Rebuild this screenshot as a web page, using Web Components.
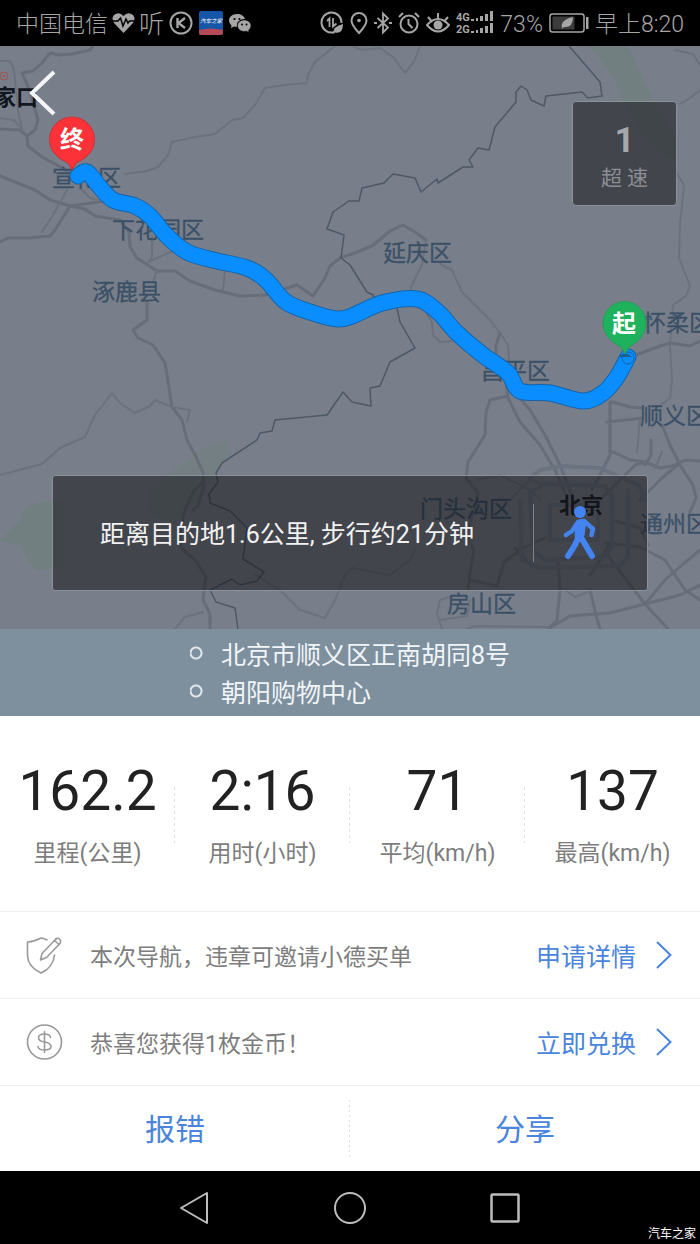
<!DOCTYPE html>
<html lang="zh-CN">
<head>
    <meta charset="UTF-8">
    <meta name="viewport" content="width=device-width, initial-scale=1.0">
    <title>行程结束</title>
    <style>
        :root {
            --blue: #4a84dc;
            --grey: #7d7d7d;
            --line: #f0f0f0;
        }
        body {
            margin: 0;
            background: #fff;
            font-family: Roboto, "Noto Sans CJK SC", sans-serif;
        }
    </style>
</head>
<body>

    <status-bar></status-bar>

    <trip-map>
        <over-speed slot="badge" count="1">超 速</over-speed>
        <walk-hint slot="hint">距离目的地1.6公里, 步行约21分钟</walk-hint>
    </trip-map>

    <trip-ends>
        <li>北京市顺义区正南胡同8号</li>
        <li>朝阳购物中心</li>
    </trip-ends>

    <trip-stats>
        <trip-stat value="162.2">里程(公里)</trip-stat>
        <trip-stat value="2:16">用时(小时)</trip-stat>
        <trip-stat value="71">平均(km/h)</trip-stat>
        <trip-stat value="137">最高(km/h)</trip-stat>
    </trip-stats>

    <info-row action="申请详情">
        <svg slot="icon" width="38" height="38" viewBox="0 0 38 38" fill="none" stroke="#999" stroke-width="1.6" stroke-linecap="round" stroke-linejoin="round">
            <path d="M21 4 Q17 2 15 2 Q9 5.500 1.500 6 V20 Q2 31 15 37 Q27 32 28.500 19"/>
            <path d="M14.500 24 L16 17.500 L28.500 4.500 L33 8.500 L20.500 21.500 Z"/>
            <path d="M28.500 4.500 Q31 1 33.500 3 Q36 5.500 33 8.500"/>
        </svg>
        本次导航，违章可邀请小德买单
    </info-row>
    <info-row action="立即兑换">
        <svg slot="icon" width="38" height="38" viewBox="0 0 38 38" fill="none" stroke="#999" stroke-width="1.6" stroke-linecap="round">
            <circle cx="18.500" cy="19" r="17"/>
            <path d="M18.500 8.500 V29.500 M24.500 14.500 Q24 11 18.500 11 Q12.500 11 12.500 15 Q12.500 18 18.500 19 Q25 20 25 23.500 Q25 27 18.500 27 Q12.500 27 12 23.500"/>
        </svg>
        恭喜您获得1枚金币！
    </info-row>

    <action-bar>
        <button>报错</button>
        <button>分享</button>
    </action-bar>

    <system-nav>汽车之家</system-nav>

    <script>

// Top system bar: carrier and app notices on the left, device state on the right
class StatusBar extends HTMLElement {
  constructor() {
    super();
    const shadow = this.attachShadow({mode: 'open'});

    shadow.innerHTML = `
      <style>
        :host {
          display: flex;
          justify-content: space-between;
          align-items: center;
          height: 46px;
          padding: 0 16px;
          background: #000;
          color: #a6a6a6;
          font-size: 23px;
          font-weight: 300;
          line-height: 30px;
          white-space: nowrap;
        }
        div {
          display: flex;
          align-items: center;
          gap: 6px;
        }
        .left { gap: 4px; }
        .app { font-size: 25px; }
        span { padding-top: 4px; }
        svg { display: block; }
      </style>
      <div class="left">
        <span>中国电信</span>
        <svg width="23" height="24" viewBox="0 0 23 24">
          <path fill="#a6a6a6" d="M11.500 22 L2 12 Q-1 7 2 4 Q7 0 11.500 5 Q16 0 21 4 Q24 7 21 12 Z"/>
          <path fill="none" stroke="#000" stroke-width="1.500" d="M0 10 H6 L8.500 7 L11 15 L14 8 L16 12 L17.500 10 H23"/>
        </svg>
        <span class="app">听</span>
        <svg width="26" height="24" viewBox="0 0 26 24" fill="none" stroke="#a6a6a6" stroke-width="2">
          <circle cx="13" cy="12" r="10.500"/>
          <path stroke-width="2.400" d="M9.500 7 V17 M17 7 L10.500 12 L17 17"/>
        </svg>
        <svg width="26" height="24" viewBox="0 0 26 24">
          <rect x="1" width="24" height="24" rx="2" fill="#1556a8"/>
          <path d="M1 19 Q13 16 25 19 V22 Q25 24 23 24 H3 Q1 24 1 22 Z" fill="#b34a55"/>
          <text x="13" y="12" text-anchor="middle" font-size="5.500" font-weight="700" font-style="italic" fill="#c8d4e4">汽车之家</text>
        </svg>
        <svg width="24" height="24" viewBox="0 0 24 24" fill="#a6a6a6">
          <path d="M9 3 C4 3 1 6 1 9.500 C1 11.500 2 13 3.500 14.500 L3 17 L6 15.500 L9 16 C8 11 12 8 17 8 C16 5 13 3 9 3 Z"/>
          <path d="M16.500 9 C12.500 9 9.500 11.500 9.500 14.700 C9.500 18 12.500 20.500 16.500 20.500 L18.500 20.200 L21 21.500 L20.500 19.300 C22 18 23 16.500 23 14.700 C23 11.500 20 9 16.500 9 Z" stroke="#000" stroke-width=".6"/>
          <g fill="#000"><circle cx="6.500" cy="8" r="1.100"/><circle cx="11.500" cy="8" r="1.100"/><circle cx="14" cy="13.500" r="1"/><circle cx="18.500" cy="13.500" r="1"/></g>
        </svg>
      </div>
      <div>
        <svg width="24" height="24" viewBox="0 0 24 24" fill="none" stroke="#a6a6a6" stroke-width="2">
          <path d="M21.500 12 A10 10 0 1 0 14 21.200"/>
          <path stroke-width="1.800" d="M7 10 L9.500 7.500 V16 M13 7 V15.500 L16.500 12.500"/>
          <path fill="#a6a6a6" stroke="none" d="M23 13 Q23 23 15 21.500 L13 23 Q13 15 23 13 Z"/>
        </svg>
        <svg width="18" height="24" viewBox="0 0 18 24" fill="none" stroke="#a6a6a6" stroke-width="2">
          <path d="M9 22 Q1.500 14 1.500 9.500 A7.500 7.500 0 0 1 16.500 9.500 Q16.500 14 9 22 Z"/>
          <circle cx="9" cy="9.500" r="1.800" fill="#a6a6a6" stroke="none"/>
        </svg>
        <svg width="18" height="24" viewBox="0 0 18 24" fill="none" stroke="#a6a6a6" stroke-width="1.800">
          <path d="M3.500 7 L14 16.500 L9 21.500 V2.500 L14 7.500 L3.500 17"/>
          <path d="M0 12 H3 M15 12 H18"/>
        </svg>
        <svg width="22" height="24" viewBox="0 0 22 24" fill="none" stroke="#a6a6a6" stroke-width="2">
          <circle cx="11" cy="13" r="8.500"/>
          <path d="M10.500 8 V13 L14.500 17 M1 6 L5 2 M17 2 L21 6"/>
        </svg>
        <svg width="24" height="24" viewBox="0 0 24 24" fill="none" stroke="#a6a6a6" stroke-width="2">
          <path d="M1 14 Q12 2 23 14 Q12 27 1 14 Z M12 7 V2 M5 9.500 L2 6 M19 9.500 L22 6"/>
          <circle cx="12" cy="14" r="4.500" fill="#a6a6a6" stroke="none"/>
        </svg>
        <svg width="38" height="24" viewBox="0 0 38 24" fill="#a6a6a6">
          <text x="0" y="10" font-size="11" font-weight="700">4G</text>
          <text x="0" y="22" font-size="11" font-weight="700">2G</text>
          <path d="M15 8h3v2h-3z M20 7h2v3h-2z M24 5h3v5h-3z M29 3h3v7h-3z M34 0h3v10h-3z M15 20h3v2h-3z M20 19h2v3h-2z M24 17h3v5h-3z M29 15h3v7h-3z M34 12h3v10h-3z"/>
        </svg>
        <span>73%</span>
        <svg width="40" height="20" viewBox="0 0 40 20">
          <rect x="1" y="1" width="34" height="18" rx="2.500" fill="none" stroke="#a6a6a6" stroke-width="1.500"/>
          <rect x="3.500" y="3.500" width="22" height="13" fill="#3c3c3c"/>
          <path d="M13 15 Q11 7 24 4 Q24 15 15 14 L12.500 16 Z" fill="#a6a6a6"/>
          <rect x="37" y="4" width="2.500" height="12" fill="#a6a6a6"/>
        </svg>
        <span>早上8:20</span>
      </div>
    `;
  }
}

// [style class, points]
const ROADS = [
  ['road', '93,46 90,50 72,54 60,55 50,53 42,63 33,71 22,73 27,84 32,99 38,120 35,130 27,136 20,130 0,129'],
  ['road', '27,136 28,146 42,157 57,165 75,176'],
  ['thin', '0,61 10,61 14,70 16,90 18,110 22,130'],
  ['thin', '0,118 14,120 22,130'],
  ['thin', '335,46 315,62 308,75 307,83 285,85 265,88 255,105 243,118 232,120 215,134 195,137 172,142 168,155 158,167 147,171 125,174'],
  ['road', '0,176 35,190 50,200 70,206 105,201 118,196'],
  ['road', '70,206 55,230 50,236 30,238 8,238 0,242'],
  ['road', '70,206 85,209 95,216 120,220 129,232 130,247 137,258 157,271 175,271 190,281 215,290 240,296 265,295 297,285 313,296 325,278 330,266 340,258 352,254 372,246 390,231 403,225 415,232 426,240'],
  ['thin', '67,190 53,215 42,232'],
  ['thin', '80,188 90,198 105,202'],
  ['thin', '152,235 152,257 148,262 175,250'],
  ['thin', '157,271 153,282'],
  ['thin', '225,270 223,290'],
  ['thin', '426,240 422,265 412,285 408,296'],
  ['thin', '440,264 452,270 462,292 475,305 490,320 500,333 508,345 509,358 506,375'],
  ['road', '500,333 496,345 496,362'],
  ['road', '147,302 147,320 133,330 138,338 153,345 165,363 167,375 172,407 182,420 187,440 195,455 203,472 204,487 198,505 193,510'],
  ['road', '203,482 193,492 185,510 180,530 181,548 195,560 206,577 203,600 210,614 210,629'],
  ['thin', '0,475 42,464 60,448 85,437 95,415 112,393 120,403 135,413 150,406 155,400 172,407 190,410 187,422'],
  ['thin', '175,629 185,617 203,612'],
  ['thin', '255,575 280,590 300,610 325,618 335,600 345,575 352,568 390,575 410,560 415,550'],
  ['thin', '352,46 362,50 380,48 393,57 405,73 415,60 420,46'],
  ['thin', '675,50 693,54 700,65'],
  ['thin', '700,90 690,98 680,104'],
  ['thin', '676,172 684,185 680,225 679,258 690,286 686,296 673,305 670,345 672,380 670,398 662,404'],
  ['road', '636,355 660,346 670,343 690,346 700,341'],
  ['thin', '427,314 432,322 433,335 440,342 452,341'],
  ['road', '506,382 508,398 520,422 540,445 555,470 566,495'],
  ['road', '518,396 530,410 545,435 560,465 572,495'],
  ['road', '508,396 490,400 486,412 485,435 468,462 466,478 478,492 476,506'],
  ['road', '610,402 610,455 600,475 592,490'],
  ['road', '607,422 642,418'],
  ['road', '612,402 630,407 642,408'],
  ['thin', '640,418 637,452'],
  ['road', '662,425 670,445 680,465 693,485 696,498 690,512'],
  ['road', '610,451 620,455 630,460 645,462 660,468 672,466 685,460 700,461'],
  ['road', '651,440 651,455 645,465'],
  ['thin', '662,452 655,468'],
  ['road', '600,500 620,480 635,465 645,462'],
  ['road', '640,500 662,478 680,463'],
  ['road', '476,506 466,535 474,550 470,572 468,590'],
  ['road', '470,580 497,586 504,562 525,547 545,538'],
  ['road', '515,548 532,566'],
  ['road', '558,562 560,590 557,620 548,629'],
  ['road', '590,590 596,615 600,629'],
  ['road', '612,540 600,560 590,575'],
  ['thin', '565,590 575,597 588,592'],
  ['road', '548,629 570,616 610,613 645,604 680,595 700,585'],
  ['road', '605,552 625,578 645,604 668,629'],
  ['road', '645,604 665,580 682,565 700,550'],
  ['road', '605,543 640,547 665,560 685,590 700,600'],
  ['road', '612,520 640,528 648,545'],
  ['thin', '450,597 440,600 437,614 442,629'],
  ['thin', '440,620 467,616 470,600'],
  ['thin', '467,629 475,626 548,627'],
  ['thin', '478,480 500,475 530,490 540,500'],
  ['thin', '510,500 530,480 545,485'],
  ['ring', '530,478 540,470 560,466 600,468 640,486 645,500'],
  ['ring', '530,492 545,484 605,486 612,496 612,548 604,557 545,560 533,550 530,492'],
  ['ring', '520,500 522,560 540,568 620,566 628,556 628,490'],
  ['ring', '550,505 598,505 598,540 550,540 550,505'],
  ['edge', '569,46 600,82 602,96 588,98 582,92 546,96 544,106 531,100 527,90 521,86 516,92 516,102 495,127 489,150 478,148 469,160 473,167 463,167 438,183 437,179 421,192 415,178 393,174 384,183 362,188 359,201 349,201 333,212 327,229 344,235 341,258 350,265 367,292 373,295 374,300'],
  ['edge', '397,308 400,322 415,348 390,362 380,386 370,388 371,406 352,402 343,392 327,415 275,420 272,431 260,433 257,440 222,463 216,473 218,482 209,494 210,503 230,511 247,528 243,559 264,572 257,581 240,585 232,579 210,590 216,602 235,608 238,629']
];

const ROUTE = [[78,176],[87,172],[99,186],[113,200],[135,206],[150,216],[167,236],[187,252],[213,260],[247,268],
  [266,280],[286,302],[313,313],[337,319],[352,316],[382,303],[417,299],[438,312],[457,333],[483,355],
  [508,373],[520,391],[550,393],[583,401],[603,393],[617,377],[628,357]];

// [x, baseline, name]
const PLACES = [
  [52, 186, '宣化区'], [112, 238, '下花园区'], [92, 300, '涿鹿县'], [383, 261, '延庆区'],
  [643, 331, '怀柔区'], [481, 379, '昌平区'], [640, 424, '顺义区'], [420, 517, '门头沟区'],
  [640, 532, '通州区'], [447, 612, '房山区']
];

// Smooth curve through all points
function curve(pts) {
  let d = `M${pts[0]}`;
  for (let i = 0; i < pts.length - 1; i++) {
    const a = pts[i - 1] || pts[i];
    const b = pts[i];
    const c = pts[i + 1];
    const e = pts[i + 2] || c;
    d += ` C${b[0] + (c[0] - a[0]) / 6},${b[1] + (c[1] - a[1]) / 6}`
      + ` ${c[0] - (e[0] - b[0]) / 6},${c[1] - (e[1] - b[1]) / 6} ${c}`;
  }
  return d;
}

class TripMap extends HTMLElement {
  constructor() {
    super();
    const shadow = this.attachShadow({mode: 'open'});
    const roads = ROADS.map(([kind, pts]) => `<polyline class="${kind}" points="${pts}"/>`).join('');
    const places = PLACES.map(([x, y, name]) => `<text x="${x}" y="${y}">${name}</text>`).join('');
    const route = curve(ROUTE);

    shadow.innerHTML = `
      <style>
        :host {
          display: block;
          position: relative;
          aspect-ratio: 700 / 583;
          overflow: hidden;
          background: #787f8a;
        }
        .map {
          display: block;
          width: 100%;
          height: 100%;
        }
        polyline {
          fill: none;
          stroke-linejoin: round;
          stroke-linecap: round;
        }
        .road { stroke: #686e79; stroke-width: 3; }
        .thin { stroke: #6c727d; stroke-width: 2; }
        .ring { stroke: #6b7380; stroke-width: 4; }
        .edge { stroke: #4f5867; stroke-width: 1.5; }
        .places {
          font-size: 23px;
          fill: #3b5067;
          stroke: #3b5067;
          stroke-width: .3;
        }
        .cities {
          font-size: 22px;
          font-weight: 700;
          fill: #12161e;
        }
        .pins {
          font-size: 24px;
          font-weight: 700;
          text-anchor: middle;
        }
        button {
          position: absolute;
          top: 20px;
          left: 24px;
          padding: 0;
          border: none;
          background: none;
          cursor: pointer;
        }
        button svg { display: block; }
        slot { position: absolute; display: block; }
        slot[name=badge] { top: 55px; right: 23px; }
        slot[name=hint] { left: 52px; right: 52px; bottom: 38px; }
      </style>
      <svg class="map" viewBox="0 46 700 583" preserveAspectRatio="xMidYMid slice">
        <g fill="#6d7f7b">
          <path d="M588 46 H628 Q640 72 652 98 L676 140 V160 Q650 150 636 120 L622 98 Q610 66 588 46 Z" opacity=".6"/>
          <path d="M0 541 L20 520 Q24 502 42 503 L64 500 V568 L36 570 Q26 560 22 545 Z" opacity=".6"/>
          <path d="M150 490 L180 465 L205 448 L225 441 L232 455 L218 470 L200 500 L172 524 L148 512 Z" opacity=".5"/>
        </g>
        ${roads}
        <g fill="none" stroke="#a0524f"><circle cx="4" cy="76" r="4"/><circle cx="4" cy="76" r="1"/></g>
        <g class="places">${places}</g>
        <g class="cities"><text x="-6" y="105">家口</text><text x="559" y="513">北京</text></g>
        <g fill="none" stroke-linecap="round" stroke-linejoin="round">
          <path d="${route}" stroke="#1664ab" stroke-width="17"/>
          <path d="${route}" stroke="#0a8dff" stroke-width="15"/>
        </g>
        <circle cx="628" cy="358" r="6" fill="none" stroke="#1664ab"/>
        <path d="M618 357 Q625 350 632 357 Z" fill="#17618c"/>
        <g class="pins">
          <path fill="#fb3237" stroke="#c9313a" d="M72 170 L68 163 Q49.500 155 49.500 139.500 A22.500 22.500 0 0 1 94.500 139.500 Q94.500 155 76 163 Z"/>
          <text x="72" y="148" fill="#fff">终</text>
          <path fill="#1fb25c" stroke="#2a9b5b" d="M625 354 L621 347 Q603 338 603 323 A21.500 21.500 0 0 1 646 323 Q646 338 629 347 Z"/>
          <text x="624" y="332" fill="#fff">起</text>
        </g>
      </svg>
      <button aria-label="返回">
        <svg width="36" height="54" viewBox="0 0 36 54" fill="none" stroke="#f3f5f7" stroke-width="4">
          <path d="M30 6 L8 27 L30 48"/>
        </svg>
      </button>
      <slot name="badge"></slot>
      <slot name="hint"></slot>
    `;
  }
}

class OverSpeed extends HTMLElement {
  constructor() {
    super();
    const shadow = this.attachShadow({mode: 'open'});

    shadow.innerHTML = `
      <style>
        :host {
          display: flex;
          flex-direction: column;
          align-items: center;
          justify-content: center;
          box-sizing: border-box;
          width: 105px;
          height: 105px;
          padding-top: 5px;
          border: 1px solid #8b9199;
          border-radius: 4px;
          background: rgba(20, 20, 24, .54);
          color: #8b8e93;
          font-size: 21px;
          line-height: 30px;
        }
        b {
          color: #a6a8ac;
          font-size: 35px;
          line-height: 44px;
        }
      </style>
      <b></b>
      <span><slot></slot></span>
    `;
    shadow.querySelector('b').textContent = this.getAttribute('count');
  }
}

class WalkHint extends HTMLElement {
  constructor() {
    super();
    const shadow = this.attachShadow({mode: 'open'});

    shadow.innerHTML = `
      <style>
        :host {
          display: flex;
          align-items: center;
          height: 114px;
          border: 1px solid #8b9199;
          border-radius: 3px;
          background: rgba(20, 20, 24, .54);
          color: #f2f2f2;
          font-size: 25px;
          line-height: 36px;
        }
        p {
          flex: 1;
          margin: 0;
          padding: 4px 12px 0 0;
          text-align: center;
        }
        button {
          width: 114px;
          height: 58px;
          padding: 0 22px 0 0;
          border: none;
          border-left: 1px solid #7f8288;
          background: none;
          cursor: pointer;
        }
        svg { display: block; margin: 0 auto; }
      </style>
      <p><slot></slot></p>
      <button aria-label="步行导航">
        <svg width="34" height="54" viewBox="0 0 34 54" fill="none" stroke="#4484f0" stroke-linecap="round" stroke-linejoin="round">
          <circle cx="17" cy="6" r="6" fill="#4484f0" stroke="none"/>
          <path stroke-width="10" d="M18 18 L16.500 29"/>
          <path stroke-width="4.500" d="M15 16 L9 25 L3 29 M21 15 L30 23 L28.500 29"/>
          <path stroke-width="6" d="M16 30 L12 39 L5 50 M19 33 L29 50"/>
        </svg>
      </button>
    `;
  }
}

// Start and destination of the trip
class TripEnds extends HTMLElement {
  constructor() {
    super();
    const shadow = this.attachShadow({mode: 'open'});

    shadow.innerHTML = `
      <style>
        :host {
          display: flex;
          justify-content: center;
          padding: 8px 0 3px;
          background: #7e8f9d;
          color: #f0f5fa;
          font-size: 25px;
          line-height: 38px;
        }
        ul {
          margin: 0;
          padding: 0;
          list-style: none;
        }
        ::slotted(li) {
          display: block;
          padding-left: 31px;
          background: radial-gradient(circle at 6px 16px, transparent 4px, #dfe7ee 5px, #dfe7ee 6px, transparent 7px);
        }
      </style>
      <ul><slot></slot></ul>
    `;
  }
}

class TripStats extends HTMLElement {
  constructor() {
    super();
    const shadow = this.attachShadow({mode: 'open'});

    shadow.innerHTML = `
      <style>
        :host {
          display: grid;
          grid-template-columns: repeat(4, 1fr);
          padding: 45px 0 42px;
        }
        ::slotted(trip-stat:not(:last-child)) {
          background: repeating-linear-gradient(#e2e2e2 0 3px, transparent 3px 6px) right center / 1px 56px no-repeat;
        }
      </style>
      <slot></slot>
    `;
  }
}

class TripStat extends HTMLElement {
  constructor() {
    super();
    const shadow = this.attachShadow({mode: 'open'});

    shadow.innerHTML = `
      <style>
        :host {
          display: flex;
          flex-direction: column;
          align-items: center;
          gap: 18px;
          color: var(--grey);
          font-size: 23px;
          line-height: 30px;
        }
        strong {
          color: #222;
          font-size: 55px;
          font-weight: 400;
          line-height: 60px;
        }
      </style>
      <strong></strong>
      <span><slot></slot></span>
    `;
    shadow.querySelector('strong').textContent = this.getAttribute('value');
  }
}

// Notice with an icon and a link at its end
class InfoRow extends HTMLElement {
  constructor() {
    super();
    const shadow = this.attachShadow({mode: 'open'});

    shadow.innerHTML = `
      <style>
        :host {
          display: flex;
          align-items: center;
          min-height: 86px;
          padding: 0 28px 0 26px;
          border-top: 1px solid var(--line);
          color: var(--grey);
          font-size: 23px;
          line-height: 34px;
        }
        p {
          flex: 1;
          margin: 0 0 0 26px;
          padding-top: 5px;
        }
        a {
          display: flex;
          align-items: center;
          gap: 20px;
          color: var(--blue);
          font-size: 25px;
          text-decoration: none;
        }
        span { padding-top: 5px; }
        ::slotted(svg) { flex: none; }
      </style>
      <slot name="icon"></slot>
      <p><slot></slot></p>
      <a href="#">
        <span></span>
        <svg width="16" height="28" viewBox="0 0 16 28" fill="none" stroke="currentColor" stroke-width="2">
          <path d="M1 1 L14.500 14 L1 27"/>
        </svg>
      </a>
    `;
    shadow.querySelector('a span').textContent = this.getAttribute('action');
  }
}

class ActionBar extends HTMLElement {
  constructor() {
    super();
    const shadow = this.attachShadow({mode: 'open'});

    shadow.innerHTML = `
      <style>
        :host {
          display: grid;
          grid-template-columns: 1fr 1fr;
          height: 85px;
          border-top: 1px solid var(--line);
        }
        ::slotted(button) {
          padding: 0 0 4px;
          border: none;
          background: none;
          color: var(--blue);
          font: inherit;
          font-size: 30px;
          cursor: pointer;
        }
        ::slotted(button:first-child) {
          background: repeating-linear-gradient(#ddd 0 2px, transparent 2px 5px) right center / 1px 58px no-repeat;
        }
      </style>
      <slot></slot>
    `;
  }
}

class SystemNav extends HTMLElement {
  constructor() {
    super();
    const shadow = this.attachShadow({mode: 'open'});

    shadow.innerHTML = `
      <style>
        :host {
          display: block;
          position: relative;
          background: #000;
        }
        nav {
          display: flex;
          justify-content: center;
          align-items: center;
          gap: 111px;
          height: 73px;
        }
        button {
          width: 44px;
          height: 44px;
          padding: 4px;
          border: none;
          background: none;
          cursor: pointer;
        }
        svg { display: block; }
        small {
          position: absolute;
          right: 4px;
          bottom: 1px;
          color: #fff;
          font-size: 12px;
          line-height: 18px;
        }
      </style>
      <nav>
        <button aria-label="返回"><svg width="36" height="36" viewBox="0 0 36 36" fill="none" stroke="#bdbdbd" stroke-width="2" stroke-linejoin="round"><path d="M30 3 V33 L4 18 Z"/></svg></button>
        <button aria-label="主屏幕"><svg width="36" height="36" viewBox="0 0 36 36" fill="none" stroke="#bdbdbd" stroke-width="2"><circle cx="18" cy="18" r="15"/></svg></button>
        <button aria-label="最近任务"><svg width="36" height="36" viewBox="0 0 36 36" fill="none" stroke="#bdbdbd" stroke-width="2.500"><rect x="4.500" y="4.500" width="27" height="27" rx="1"/></svg></button>
      </nav>
      <small><slot></slot></small>
    `;
  }
}

customElements.define('status-bar', StatusBar);
customElements.define('trip-map', TripMap);
customElements.define('over-speed', OverSpeed);
customElements.define('walk-hint', WalkHint);
customElements.define('trip-ends', TripEnds);
customElements.define('trip-stats', TripStats);
customElements.define('trip-stat', TripStat);
customElements.define('info-row', InfoRow);
customElements.define('action-bar', ActionBar);
customElements.define('system-nav', SystemNav);
    </script>
</body>
</html>
